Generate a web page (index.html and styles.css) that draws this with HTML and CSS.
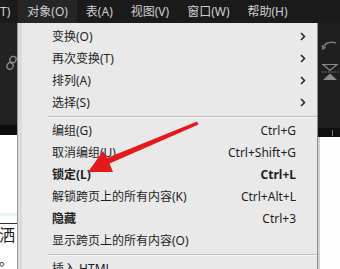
FILE: index.html
```html
<!DOCTYPE html>
<html lang="zh-CN">
<head>
<meta charset="utf-8">
<title>对象菜单</title>
<link rel="stylesheet" href="styles.css">
</head>
<body>
<div class="screen">
  <div class="menubar">
    <span class="mb-item first">T)</span>
    <span class="mb-item active">对象(O)</span>
    <span class="mb-item">表(A)</span>
    <span class="mb-item">视图(V)</span>
    <span class="mb-item">窗口(W)</span>
    <span class="mb-item">帮助(H)</span>
  </div>
  <div class="workspace">
    <div class="left-col">
      <div class="panel-dark">
        <svg class="link-icon" width="14" height="16" viewBox="0 0 14 16">
          <g fill="none" stroke="#8a8a8a" stroke-width="1.4">
            <ellipse cx="9" cy="4.5" rx="3" ry="3.2" transform="rotate(30 9 4.5)"/>
            <ellipse cx="6" cy="11" rx="3" ry="3.4" transform="rotate(30 6 11)"/>
          </g>
        </svg>
      </div>
      <div class="ruler-dark"></div>
      <div class="doc-white">
        <div class="doc-band"></div>
        <div class="doc-line"></div>
        <div class="doc-char">洒</div>
        <div class="doc-dot">。</div>
      </div>
    </div>
    <div class="menu">
      <div class="row"><span class="label">变换(O)</span><span class="arrow"><svg width="6" height="9" viewBox="0 0 6 9"><path d="M1 1l3.5 3.5L1 8" fill="none" stroke="#222" stroke-width="1.5"/></svg></span></div>
      <div class="row"><span class="label">再次变换(T)</span><span class="arrow"><svg width="6" height="9" viewBox="0 0 6 9"><path d="M1 1l3.5 3.5L1 8" fill="none" stroke="#222" stroke-width="1.5"/></svg></span></div>
      <div class="row"><span class="label">排列(A)</span><span class="arrow"><svg width="6" height="9" viewBox="0 0 6 9"><path d="M1 1l3.5 3.5L1 8" fill="none" stroke="#222" stroke-width="1.5"/></svg></span></div>
      <div class="row"><span class="label">选择(S)</span><span class="arrow"><svg width="6" height="9" viewBox="0 0 6 9"><path d="M1 1l3.5 3.5L1 8" fill="none" stroke="#222" stroke-width="1.5"/></svg></span></div>
      <div class="sep"></div>
      <div class="row"><span class="label">编组(G)</span><span class="key">Ctrl+G</span></div>
      <div class="row"><span class="label">取消编组(U)</span><span class="key">Ctrl+Shift+G</span></div>
      <div class="row bold"><span class="label">锁定(L)</span><span class="key">Ctrl+L</span></div>
      <div class="row"><span class="label">解锁跨页上的所有内容(K)</span><span class="key">Ctrl+Alt+L</span></div>
      <div class="row"><span class="label strong">隐藏</span><span class="key">Ctrl+3</span></div>
      <div class="row"><span class="label">显示跨页上的所有内容(O)</span></div>
      <div class="sep"></div>
      <div class="row"><span class="label">插入 HTML...</span></div>
    </div>
    <div class="right-col">
      <div class="panel-dark-r">
        <svg class="r-icon1" width="18" height="10" viewBox="0 0 18 10">
          <path d="M2 9C3 3 9 1 15 3" fill="none" stroke="#7a7a7a" stroke-width="1.6"/>
          <path d="M1 5l1 4 3-2" fill="none" stroke="#7a7a7a" stroke-width="1.3"/>
        </svg>
        <svg class="r-icon2" width="18" height="18" viewBox="0 0 18 18">
          <path d="M2 1.5h14L9 7.5z" fill="none" stroke="#8a8a8a" stroke-width="1.2"/>
          <path d="M1 9h16" stroke="#8a8a8a" stroke-width="1" stroke-dasharray="1.5 1.5"/>
          <path d="M2 17h14L9 10.5z" fill="#8a8a8a"/>
        </svg>
      </div>
      <div class="ruler-dark-r"><span class="tick"></span></div>
      <div class="doc-white-r"></div>
    </div>
  </div>
  <svg class="red-arrow" width="340" height="269" viewBox="0 0 340 269">
    <polygon points="88,172 103,151 107,158 197,121.5 198.5,124.5 109.5,163.5 113,172" fill="#e3191c"/>
  </svg>
</div>
</body>
</html>
```

FILE: styles.css
```css
* { box-sizing: border-box; }
html, body { margin: 0; padding: 0; }
body {
  width: 340px;
  height: 269px;
  overflow: hidden;
  background: #1c1c1c;
  font-family: "Noto Sans", "Noto Sans CJK SC", sans-serif;
  font-size: 12px;
}
.screen {
  position: relative;
  width: 340px;
  height: 269px;
  overflow: hidden;
  display: flex;
  flex-direction: column;
}
.menubar {
  height: 23px;
  flex: none;
  display: flex;
  align-items: center;
  background: #1b1b1b;
  color: #cfcfcf;
}
.mb-item {
  height: 23px;
  line-height: 23px;
  padding: 0 9px;
  white-space: nowrap;
}
.mb-item.first { padding-left: 0; padding-right: 8px; }
.mb-item.active { background: #262626; }
.workspace {
  flex: 1;
  display: flex;
  min-height: 0;
}
.left-col {
  width: 17px;
  flex: none;
  display: flex;
  flex-direction: column;
  overflow: hidden;
}
.panel-dark {
  height: 102px;
  background: #222222;
  position: relative;
}
.link-icon { position: absolute; left: 4px; top: 32px; }
.ruler-dark { height: 10px; background: #0c0c0c; }
.doc-white {
  flex: 1;
  background: #ffffff;
  position: relative;
}
.doc-band { position: absolute; left: 0; right: 0; top: 78px; height: 3px; background: #e3f4f6; }
.doc-line { position: absolute; left: 0; right: 0; top: 88px; height: 1px; background: #333; }
.doc-char {
  position: absolute;
  left: -1px;
  top: 87px;
  font-family: "Noto Sans CJK SC", serif;
  font-size: 16px;
  color: #222;
}
.doc-dot {
  position: absolute;
  left: -1px;
  top: 114px;
  font-family: "Noto Sans CJK SC", serif;
  font-size: 14px;
  color: #222;
}
.menu {
  width: 301px;
  flex: none;
  background: #e9e9e9;
  border-left: 1px solid #9a9a9a;
  border-right: 1px solid #8c8c8c;
  box-shadow: inset 4px 0 0 #dcdcdc;
  padding-top: 2px;
  color: #1e1e1e;
}
.row {
  height: 22px;
  display: flex;
  align-items: center;
  padding-left: 34px;
  padding-right: 0;
  white-space: nowrap;
}
.row.bold { font-weight: 700; }
.label { flex: 1; }
.label.strong { font-weight: 700; }
.key { padding-right: 21px; }
.arrow {
  width: 20px;
  display: flex;
  align-items: center;
  padding-left: 3px;
}
.arrow svg { display: block; }
.sep {
  height: 6px;
  margin-left: 30px;
  display: flex;
  align-items: center;
}
.sep::before {
  content: "";
  display: block;
  width: 100%;
  height: 1px;
  background: #bdbdbd;
  box-shadow: 0 1px 0 #f8f8f8;
}
.right-col {
  flex: 1;
  display: flex;
  flex-direction: column;
}
.panel-dark-r {
  height: 105px;
  background: #1f1f1f;
  position: relative;
}
.r-icon1 { position: absolute; left: 3px; top: 17px; }
.r-icon2 { position: absolute; left: 3px; top: 40px; }
.ruler-dark-r {
  height: 9px;
  background: #101010;
  position: relative;
}
.tick { position: absolute; left: 14px; top: 2px; width: 1px; height: 6px; background: #777; }
.doc-white-r {
  flex: 1;
  background: #fdfdfd;
  border-left: 2px solid #d2d2d2;
}
.red-arrow {
  position: absolute;
  left: 0;
  top: 0;
  pointer-events: none;
}
```
